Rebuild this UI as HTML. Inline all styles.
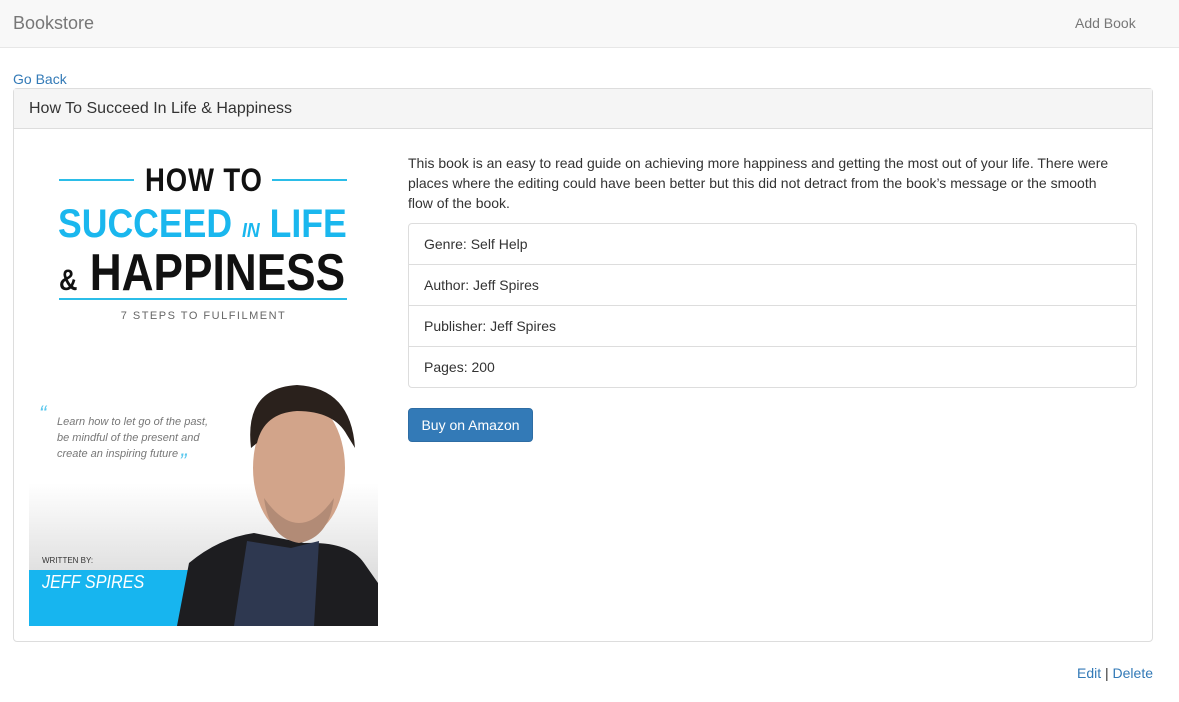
<!DOCTYPE html>
<html><head><meta charset="utf-8"><style>
*{box-sizing:border-box}
body{margin:0;font-family:"Liberation Sans",Helvetica,Arial,sans-serif;font-size:14px;color:#333;background:#fff;width:1179px;height:702px;position:relative;overflow:hidden}
a{color:#337ab7;text-decoration:none}
.nav{position:absolute;left:0;top:0;width:1179px;height:48px;background:#f8f8f8;border-bottom:1px solid #e7e7e7}
.brand{position:absolute;left:13px;top:13px;font-size:18px;color:#777}
.add{position:absolute;left:1075px;top:15px;color:#777}
.abs{position:absolute}
.panel{position:absolute;left:13px;top:88px;width:1140px;height:554px;border:1px solid #ddd;border-radius:4px}
.ph{height:40px;background:#f5f5f5;border-bottom:1px solid #ddd;padding:11px 15px;font-size:16px;color:#333}
.desc{position:absolute;left:408px;top:153px;width:712px;line-height:20px}
.lg{position:absolute;left:408px;top:223px;width:729px;border:1px solid #ddd;border-radius:4px}
.lg div{height:41px;padding:12px 15px 0;border-top:1px solid #ddd}
.lg div:first-child{border-top:0;height:40px}
.btn{position:absolute;left:408px;top:408px;width:125px;height:34px;background:#337ab7;border:1px solid #2e6da4;border-radius:4px;color:#fff;text-align:center;line-height:32px}
.cover{position:absolute;left:29px;top:143px;width:349px;height:483px;overflow:hidden;background:linear-gradient(#fff 0,#fff 340px,#dcdcdc 440px,#e6e6e6 483px)}
.c{position:absolute;font-weight:bold;white-space:nowrap}
</style></head><body>
<div class="nav"><span class="brand">Bookstore</span><span class="add">Add Book</span></div>
<a class="abs" style="left:13px;top:71px">Go Back</a>
<div class="panel"><div class="ph">How To Succeed In Life &amp; Happiness</div></div>
<div class="cover">
 <div class="abs" style="left:30px;top:36px;width:75px;height:2px;background:#2bbde8"></div>
 <div class="abs" style="left:243px;top:36px;width:75px;height:2px;background:#2bbde8"></div>
 <div class="c" style="left:116px;top:19px;font-size:32px;color:#111;letter-spacing:1px;transform:scaleX(.86);transform-origin:left">HOW TO</div>
 <div class="c" style="left:29px;top:59px;font-size:40px;color:#1ab7ee;transform:scaleX(.89);transform-origin:left">SUCCEED <span style="font-size:20px;font-style:italic">IN</span> LIFE</div>
 <div class="c" style="left:30px;top:100px;font-size:52px;color:#111;transform:scaleX(.85);transform-origin:left"><span style="font-size:30px">&amp;</span> HAPPINESS</div>
 <div class="abs" style="left:30px;top:155px;width:288px;height:2px;background:#2bbde8"></div>
 <div class="abs" style="left:0;width:349px;top:167px;text-align:center;font-size:11px;letter-spacing:1.5px;color:#666">7 STEPS TO FULFILMENT</div>
 <div class="abs" style="left:10px;top:258px;color:#5bc8ee;font-size:22px;font-style:italic">“</div>
 <div class="abs" style="left:28px;top:271px;font-size:11px;font-style:italic;color:#777;line-height:16px">Learn how to let go of the past,<br>be mindful of the present and<br>create an inspiring future</div>
 <div class="abs" style="left:150px;top:306px;color:#5bc8ee;font-size:22px;font-style:italic">”</div>
 <div class="abs" style="left:13px;top:413px;font-size:8px;color:#333">WRITTEN BY:</div>
 <div class="abs" style="left:0;top:427px;width:165px;height:56px;background:#17b5ef"></div>
 <div class="abs" style="left:13px;top:429px;font-size:18px;font-style:italic;color:#fff;transform:scaleX(.9);transform-origin:left">JEFF SPIRES</div>
 <svg class="abs" style="left:0;top:0" width="349" height="483">
  <path d="M148 483 L160 420 Q190 395 225 390 L275 400 Q320 398 335 420 L349 440 L349 483Z" fill="#1d1d20"/>
  <path d="M205 483 L218 398 L262 405 L290 398 L285 483Z" fill="#2e3850"/>
  <ellipse cx="270" cy="325" rx="46" ry="70" fill="#d2a48a"/>
  <path d="M222 305 Q215 245 268 242 Q322 245 326 305 L318 292 Q305 268 268 268 Q235 270 228 300Z" fill="#2a211c"/>
  <path d="M235 355 Q270 405 305 355 Q300 395 270 400 Q240 395 235 355Z" fill="#b28b76"/>
 </svg>
</div>
<div class="desc">This book is an easy to read guide on achieving more happiness and getting the most out of your life. There were places where the editing could have been better but this did not detract from the book’s message or the smooth flow of the book.</div>
<div class="lg"><div>Genre: Self Help</div><div>Author: Jeff Spires</div><div>Publisher: Jeff Spires</div><div>Pages: 200</div></div>
<div class="btn">Buy on Amazon</div>
<div class="abs" style="right:26px;top:665px"><a>Edit</a> | <a>Delete</a></div>
</body></html>
